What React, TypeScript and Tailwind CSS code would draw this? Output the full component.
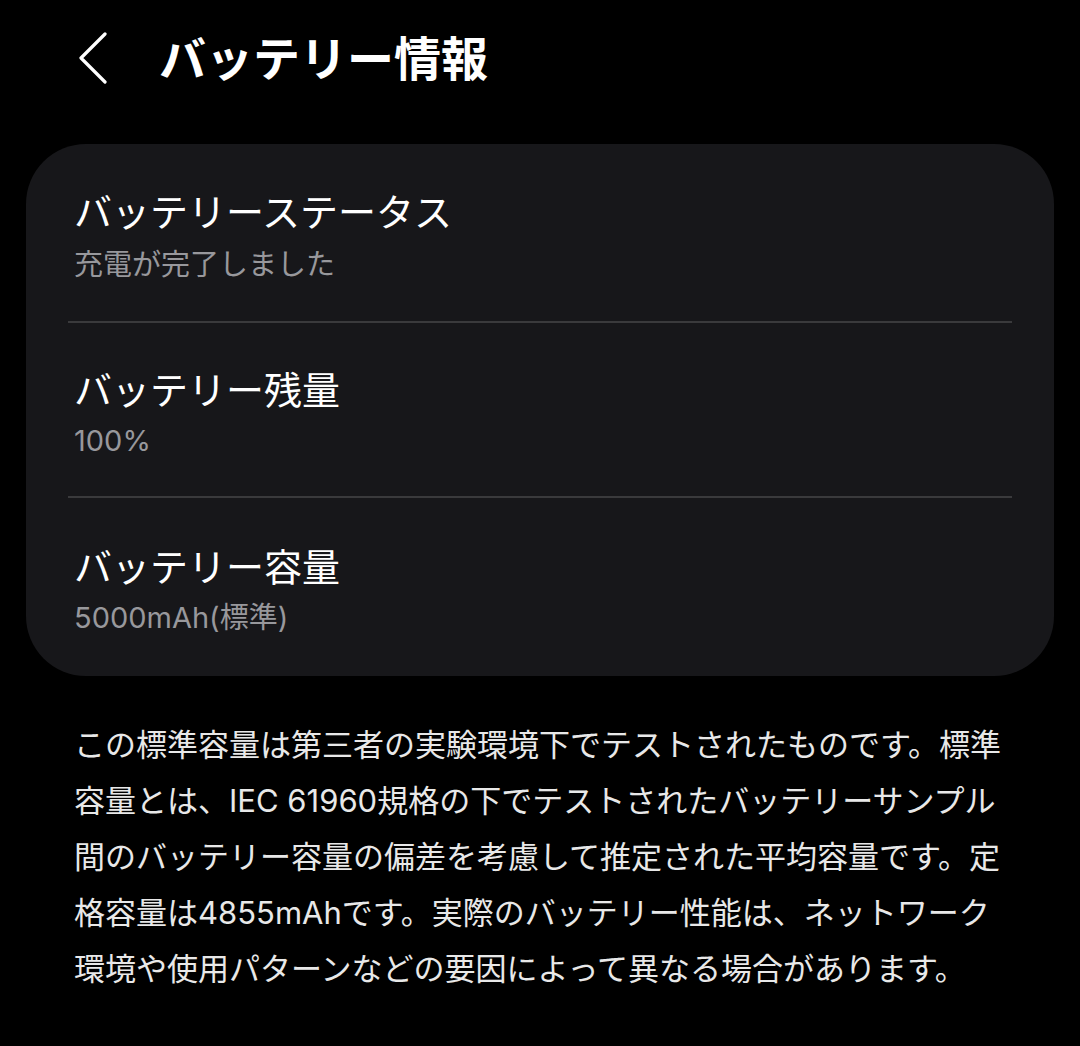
const ROWS = [
  { title: "バッテリーステータス", value: "充電が完了しました", pad: "pt-[44px] pb-[36px]", gap: "mt-[9px]" },
  { title: "バッテリー残量", value: "100%", pad: "pt-[43px] pb-[35px]", gap: "mt-[7px]" },
  { title: "バッテリー容量", value: "5000mAh(標準)", pad: "pt-[45px] pb-[38px]", gap: "mt-[7px]" },
];

const NOTE = [
  "この標準容量は第三者の実験環境下でテストされたものです。標準",
  "容量とは、IEC 61960規格の下でテストされたバッテリーサンプル",
  "間のバッテリー容量の偏差を考慮して推定された平均容量です。定",
  "格容量は4855mAhです。実際のバッテリー性能は、ネットワーク",
  "環境や使用パターンなどの要因によって異なる場合があります。",
];

function BackIcon() {
  return (
    <svg width="30" height="52" viewBox="0 0 30 52" fill="none" className="shrink-0">
      <polyline
        points="27,2 3,26 27,50"
        stroke="white"
        strokeWidth="3.2"
        strokeLinecap="round"
        strokeLinejoin="round"
      />
    </svg>
  );
}

export default function App() {
  return (
    <div
      className="min-h-[1046px] w-[1080px] bg-black text-white"
      style={{ fontFamily: 'Inter, "Noto Sans CJK JP", "Noto Sans", sans-serif' }}
    >
      {/* Header */}
      <header className="flex h-[124px] items-center pl-[78px] pb-[8px]">
        <BackIcon />
        <h1 className="ml-[51px] text-[47px] font-semibold leading-none">
          バッテリー情報
        </h1>
      </header>

      {/* Card */}
      <section className="mx-[26px] mt-[20px] rounded-[60px] bg-[#17171a] px-[42px]">
        {ROWS.map((row, i) => (
          <div key={row.title}>
            {i > 0 && <div className="h-[2px] bg-[#3a3a3c]" />}
            <div className={`px-[6px] ${row.pad}`}>
              <div className="text-[38px] leading-[48px] text-white">{row.title}</div>
              <div className={`${row.gap} text-[29px] leading-[40px] text-[#98989c]`}>
                {row.value}
              </div>
            </div>
          </div>
        ))}
      </section>

      {/* Note */}
      <div className="mt-[41px] px-[74px] text-[31px] leading-[56px] text-[#e8e8e8] whitespace-nowrap">
        {NOTE.map((line) => (
          <div key={line}>{line}</div>
        ))}
      </div>
    </div>
  );
}
